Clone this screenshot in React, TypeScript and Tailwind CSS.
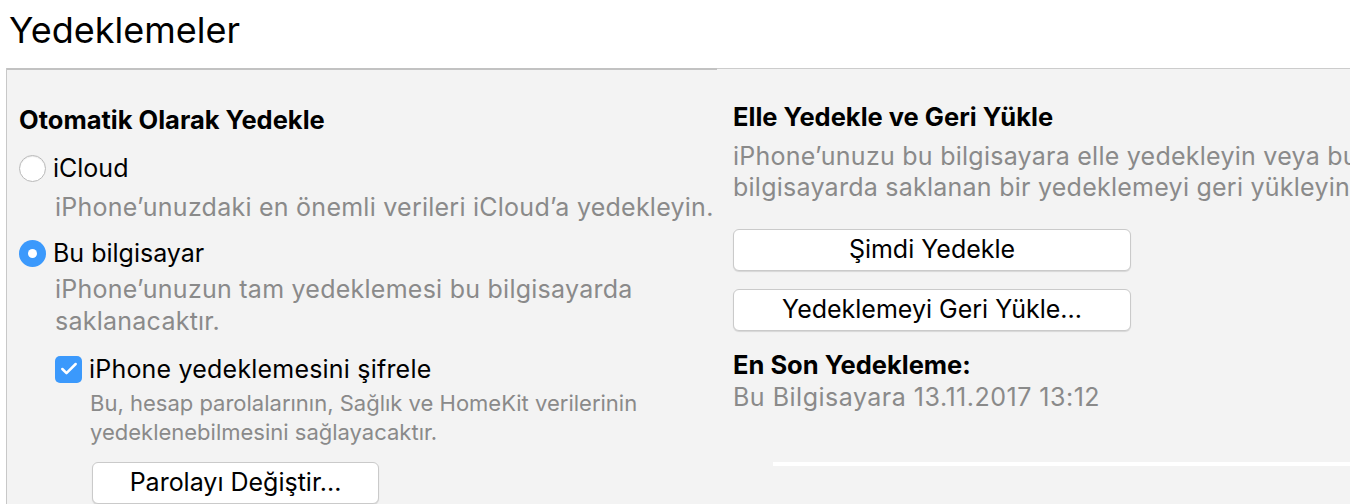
import { Check } from 'lucide-react';

const sf = '[font-family:Inter,Roboto,"Liberation_Sans",sans-serif]';

function Radio({ checked }: { checked?: boolean }) {
  if (checked) {
    return (
      <span className="flex h-[27px] w-[27px] shrink-0 items-center justify-center rounded-full bg-[#3b99fc]">
        <span className="h-[9px] w-[9px] rounded-full bg-white" />
      </span>
    );
  }
  return <span className="h-[27px] w-[27px] shrink-0 rounded-full border border-[#b9b9b9] bg-white shadow-[inset_0_1px_1px_rgba(0,0,0,0.08)]" />;
}

function MacButton({ label, className }: { label: string; className?: string }) {
  return (
    <div
      className={`flex h-[42px] items-center justify-center rounded-[6px] border border-[#cacaca] bg-white text-[25px] text-black shadow-[0_1px_1px_rgba(0,0,0,0.12)] ${className ?? ''}`}
    >
      {label}
    </div>
  );
}

export default function App() {
  return (
    <div className={`h-[504px] w-[1350px] overflow-hidden bg-white ${sf}`}>
      <h1 className="h-[68px] pl-[9px] pt-[6px] text-[36px] leading-[48px] text-black">Yedeklemeler</h1>

      <div className="ml-[6px] flex h-[436px] border-l border-[#c8c8c8] bg-[#f3f3f3]">
        {/* sol sütun */}
        <div className="w-[710px] shrink-0 border-t-2 border-[#c2c2c2] pl-[12px] pt-[36px]">
          <div className="text-[25.5px] font-bold leading-[28px] text-black">Otomatik Olarak Yedekle</div>

          <div className="mt-[19px] flex items-center gap-[7px]">
            <Radio />
            <span className="text-[25px] leading-[30px] text-black">iCloud</span>
          </div>
          <div className="mt-[8px] pl-[36px] text-[25px] leading-[32px] tracking-[0.25px] text-[#8a8a8a]">
            iPhone’unuzdaki en önemli verileri iCloud’a yedekleyin.
          </div>

          <div className="mt-[15px] flex items-center gap-[7px]">
            <Radio checked />
            <span className="text-[25px] leading-[30px] text-black">Bu bilgisayar</span>
          </div>
          <div className="mt-[5px] pl-[36px] text-[25px] leading-[32px] tracking-[0.25px] text-[#8a8a8a]">
            iPhone’unuzun tam yedeklemesi bu bilgisayarda
            <br />
            saklanacaktır.
          </div>

          <div className="mt-[17px] flex items-center gap-[7px] pl-[36px]">
            <span className="flex h-[27px] w-[27px] shrink-0 items-center justify-center rounded-[5px] bg-[#3b99fc]">
              <Check className="h-[20px] w-[20px] text-white" strokeWidth={3} />
            </span>
            <span className="text-[25px] leading-[30px] tracking-[0.2px] text-black">iPhone yedeklemesini şifrele</span>
          </div>
          <div className="mt-[5px] pl-[71px] text-[22px] leading-[29px] text-[#8a8a8a]">
            Bu, hesap parolalarının, Sağlık ve HomeKit verilerinin
            <br />
            yedeklenebilmesini sağlayacaktır.
          </div>

          <div className="mt-[15px] pl-[73px]">
            <MacButton label="Parolayı Değiştir..." className="w-[287px]" />
          </div>
        </div>

        {/* sağ sütun */}
        <div className="flex min-w-0 flex-1 flex-col overflow-hidden border-t border-[#cccccc] pl-[16px] pt-[34px]">
          <div className="whitespace-nowrap text-[25.5px] font-bold leading-[28px] text-black">Elle Yedekle ve Geri Yükle</div>
          <div className="mt-[10px] whitespace-nowrap text-[25px] leading-[31px] tracking-[0.25px] text-[#8a8a8a]">
            iPhone’unuzu bu bilgisayara elle yedekleyin veya bu
            <br />
            bilgisayarda saklanan bir yedeklemeyi geri yükleyin.
          </div>

          <MacButton label="Şimdi Yedekle" className="mt-[26px] w-[398px] shrink-0" />
          <MacButton label="Yedeklemeyi Geri Yükle..." className="mt-[18px] w-[398px] shrink-0" />

          <div className="mt-[19px] text-[25.5px] font-bold leading-[30px] text-black">En Son Yedekleme:</div>
          <div className="mt-[1px] text-[25px] leading-[32px] tracking-[0.5px] text-[#8a8a8a]">Bu Bilgisayara 13.11.2017 13:12</div>

          <div className="ml-[40px] mt-[49px] h-[4px] shrink-0 bg-white" />
        </div>
      </div>
    </div>
  );
}
